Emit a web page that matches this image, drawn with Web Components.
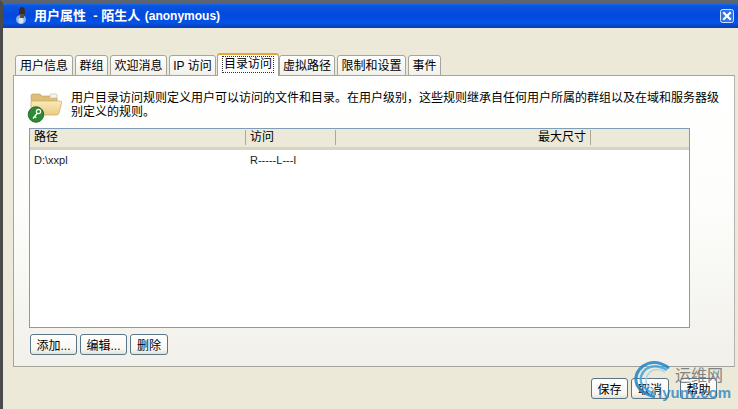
<!DOCTYPE html>
<html>
<head>
<meta charset="utf-8">
<style>
  html, body { margin: 0; padding: 0; width: 738px; height: 409px; overflow: hidden; background: #ece9d8; }
  body { font: 12px "Liberation Sans", "Noto Sans CJK SC", sans-serif; color: #000; }
</style>
</head>
<body>
<user-dialog>
  <span slot="title">用户属性&nbsp; - 陌生人&nbsp;<span style="font-size:12px;margin-left:1px">(anonymous)</span></span>
  <tab-bar slot="tabs">
    <tab-item w="58">用户信息</tab-item>
    <tab-item w="33">群组</tab-item>
    <tab-item w="57">欢迎消息</tab-item>
    <tab-item w="47">IP 访问</tab-item>
    <tab-item w="62" active>目录访问</tab-item>
    <tab-item w="56">虚拟路径</tab-item>
    <tab-item w="69">限制和设置</tab-item>
    <tab-item w="33">事件</tab-item>
  </tab-bar>
  <rule-panel slot="panel">
    <folder-key slot="icon"></folder-key>
    <span slot="desc">用户目录访问规则定义用户可以访问的文件和目录。在用户级别，这些规则继承自任何用户所属的群组以及在域和服务器级别定义的规则。</span>
    <rule-table slot="table"></rule-table>
    <xp-button slot="actions" w="47">添加...</xp-button>
    <xp-button slot="actions" w="47">编辑...</xp-button>
    <xp-button slot="actions" w="38">删除</xp-button>
  </rule-panel>
  <xp-button slot="footer" w="37" style="margin-right:3px">保存</xp-button>
  <xp-button slot="footer" w="38" style="margin-right:11px">取消</xp-button>
  <xp-button slot="footer" w="37">帮助</xp-button>
</user-dialog>
<site-mark></site-mark>

<script>
  const define = (name, html, setup) => {
    customElements.define(name, class extends HTMLElement {
      constructor() {
        super();
        this.attachShadow({mode: 'open'}).innerHTML = html;
      }
      connectedCallback() {
        if(setup) setup(this);
      }
    });
  };

  define('user-dialog', `
    <style>
      :host { display: block; width: 738px; height: 409px; box-sizing: border-box; border-top: 3px solid #5b6470; border-left: 3px solid #4a4a4a; background: #ece9d8; }
      #bar { display: flex; align-items: center; height: 25px; box-sizing: border-box; padding: 0 4px 0 13px; gap: 7px;
        background: linear-gradient(to bottom, #1f6fe6 0, #0a55e0 3px, #0348dc 12px, #0453e6 20px, #0a3fb8 24px, #0a3fb8 25px);
        color: #fff; font-weight: bold; font-size: 13px; }
      #title { flex: 1; white-space: pre; position: relative; top: -1px; font-size: 13px; }
      #body { padding: 26px 3px 0 10px; }
      #foot { display: flex; justify-content: flex-end; padding: 11px 21px 0 0; }
      #user { width: 11px; height: 17px; flex: none; }
      #close { width: 14px; height: 14px; flex: none; }
    </style>
    <div id="bar">
      <svg id="user" viewBox="0 0 11 17"><ellipse cx="5" cy="12.5" rx="5" ry="4.5" fill="#8fb2dc"/><ellipse cx="5" cy="13.5" rx="2.5" ry="3" fill="#d6e4f4"/><ellipse cx="6" cy="4.5" rx="3" ry="4.5" fill="#3a2a25"/><rect x="4" y="7" width="4" height="4" fill="#5c4a44"/></svg>
      <span id="title"><slot name="title"></slot></span>
      <svg id="close" viewBox="0 0 14 14"><rect x=".5" y=".5" width="13" height="13" rx="2" fill="#2f74e8" stroke="#cfe0fa"/><path d="M4 4l6 6M10 4l-6 6" stroke="#fff" stroke-width="2.2" stroke-linecap="square"/></svg>
    </div>
    <div id="body"><slot name="tabs"></slot><slot name="panel"></slot></div>
    <div id="foot"><slot name="footer"></slot></div>
  `);

  define('tab-bar', `
    <style>
      :host { display: flex; align-items: flex-end; height: 22px; padding-left: 2px; gap: 2px; position: relative; z-index: 1; margin-bottom: -1px; }
    </style>
    <slot></slot>
  `);

  define('tab-item', `
    <style>
      :host { display: flex; justify-content: center; align-items: center; height: 21px; padding-bottom: 2px; box-sizing: border-box; font-size: 12px; white-space: nowrap;
        border: 1px solid #a5a59c; border-bottom: 1px solid #a5a59c; border-radius: 3px 3px 0 0;
        background: linear-gradient(to bottom, #fff, #f1f0e8); }
      :host([active]) { height: 23px; margin: 0 -2px 0 -1px; padding-bottom: 2px; border-top: 2px solid #e8a33a; border-bottom: 0; background: #fff; }
      :host([active]) span { outline: 1px dotted #333; padding: 1px 1px; line-height: 13px; }
    </style>
    <span><slot></slot></span>
  `, el => { el.style.width = el.getAttribute('w') + 'px'; });

  define('rule-panel', `
    <style>
      :host { display: block; width: 722px; height: 292px; box-sizing: border-box; border: 1px solid #a5a59c; border-right-color: #b5b5ae;
        background: linear-gradient(to bottom, #fff 0, #fdfdfb 45%, #f1f0ea 100%); padding: 10px 45px 0 15px; }
      #top { display: flex; gap: 12px; height: 42px; align-items: flex-start; }
      #desc { flex: none; padding-top: 5px; line-height: 14px; font-size: 12px; width: 650px; }
      #actions { display: flex; gap: 3px; margin: 6px 0 0 1px; }
    </style>
    <div id="top">
      <slot name="icon"></slot>
      <div id="desc"><slot name="desc"></slot></div>
    </div>
    <slot name="table"></slot>
    <div id="actions"><slot name="actions"></slot></div>
  `);

  define('folder-key', `
    <style>
      :host { display: block; width: 33px; height: 38px; margin-left: -3px; flex: none; }
      svg { display: block; }
    </style>
    <svg width="36" height="38" viewBox="0 0 36 38">
      <defs><linearGradient id="f" x1="0" y1="0" x2="0" y2="1"><stop offset="0" stop-color="#fbeab8"/><stop offset="1" stop-color="#e9cd80"/></linearGradient></defs>
      <path d="M5 10q0-2 2-2h7l2 2h13q2 0 2 2v16H6z" fill="#dcc07a" stroke="#b89a55" stroke-width=".6"/>
      <rect x="24" y="8" width="7" height="4" rx="1" fill="#f6f4ec" stroke="#c2b99a" stroke-width=".6"/>
      <path d="M5 17q0-2 2-2h27q2 0 1.6 2L33 27q-.4 2-2.4 2H12q-7 0-7-3z" fill="url(#f)" stroke="#bfa05c" stroke-width=".6"/>
      <circle cx="10" cy="28.5" r="7.8" fill="#2c8a34" stroke="#1a5c22" stroke-width=".8"/>
      <circle cx="12.5" cy="25.5" r="2.1" fill="none" stroke="#fff" stroke-width="1.2"/>
      <path d="M11 27.5l-4 5M8.5 30.5l1.8 1.2" stroke="#fff" stroke-width="1.4" fill="none"/>
    </svg>
  `);

  define('rule-table', `
    <style>
      :host { display: block; width: 661px; height: 200px; box-sizing: border-box; border: 1px solid #7f9db9; background: #fff; }
      #head { display: grid; grid-template-columns: 216px 90px 255px; height: 21px; box-sizing: border-box; background: #ece9d8; border-bottom: 3px solid #d8d4c2; font-size: 12px; line-height: 18px; }
      #head > div { padding-left: 4px; box-sizing: border-box; border-right: 1px solid #aca899; height: 15px; line-height: 15px; margin-top: 1px; }
      #head > .num { text-align: right; padding: 0 4px 0 0; }
      #rows { display: grid; grid-template-columns: 216px 200px; padding-top: 3px; font-size: 11px; line-height: 14px; color: #222; }
      #rows > div { padding-left: 4px; }
    </style>
    <div id="head"><div>路径</div><div>访问</div><div class="num">最大尺寸</div></div>
    <div id="rows"><div>D:\\xxpl</div><div>R-----L---I</div></div>
  `);

  define('xp-button', `
    <style>
      :host { display: inline-flex; justify-content: center; align-items: center; height: 21px; box-sizing: border-box; font-size: 12px; white-space: nowrap;
        border: 1px solid #5a7488; border-radius: 3px; background: linear-gradient(to bottom, #fff 0, #f8f7f2 75%, #e4e1d4 100%); }
    </style>
    <slot></slot>
  `, el => { el.style.width = el.getAttribute('w') + 'px'; });

  // watermark sits on top of the footer buttons
  define('site-mark', `
    <style>
      :host { position: absolute; left: 625px; top: 355px; width: 113px; height: 54px; pointer-events: none; }
      svg { position: absolute; left: 0; top: 0; opacity: .85; }
      #cn { position: absolute; left: 50px; top: 10px; font: 16px "Noto Sans CJK SC", sans-serif; color: #6e7378; opacity: .85; line-height: 18px; }
      #en { position: absolute; left: 33px; top: 29px; font: bold 15px "Liberation Sans", sans-serif; color: #1a7fc4; opacity: .75; line-height: 18px; }
    </style>
    <svg width="60" height="54" viewBox="0 0 60 54">
      <path d="M44 13Q30 3 18 11Q8 19 12 30Q16 38 30 42" fill="none" stroke="#1f84c8" stroke-width="3"/>
      <path d="M42 15Q30 8 21 14Q13 21 17 30Q20 35 30 39" fill="none" stroke="#3ea6e0" stroke-width="2.4"/>
      <path d="M40 17Q31 12 25 17Q19 23 22 30Q25 33 31 36" fill="none" stroke="#9ad2ef" stroke-width="1.6"/>
    </svg>
    <div id="cn">运维网</div>
    <div id="en">iyunv.com</div>
  `);
</script>
</body>
</html>
